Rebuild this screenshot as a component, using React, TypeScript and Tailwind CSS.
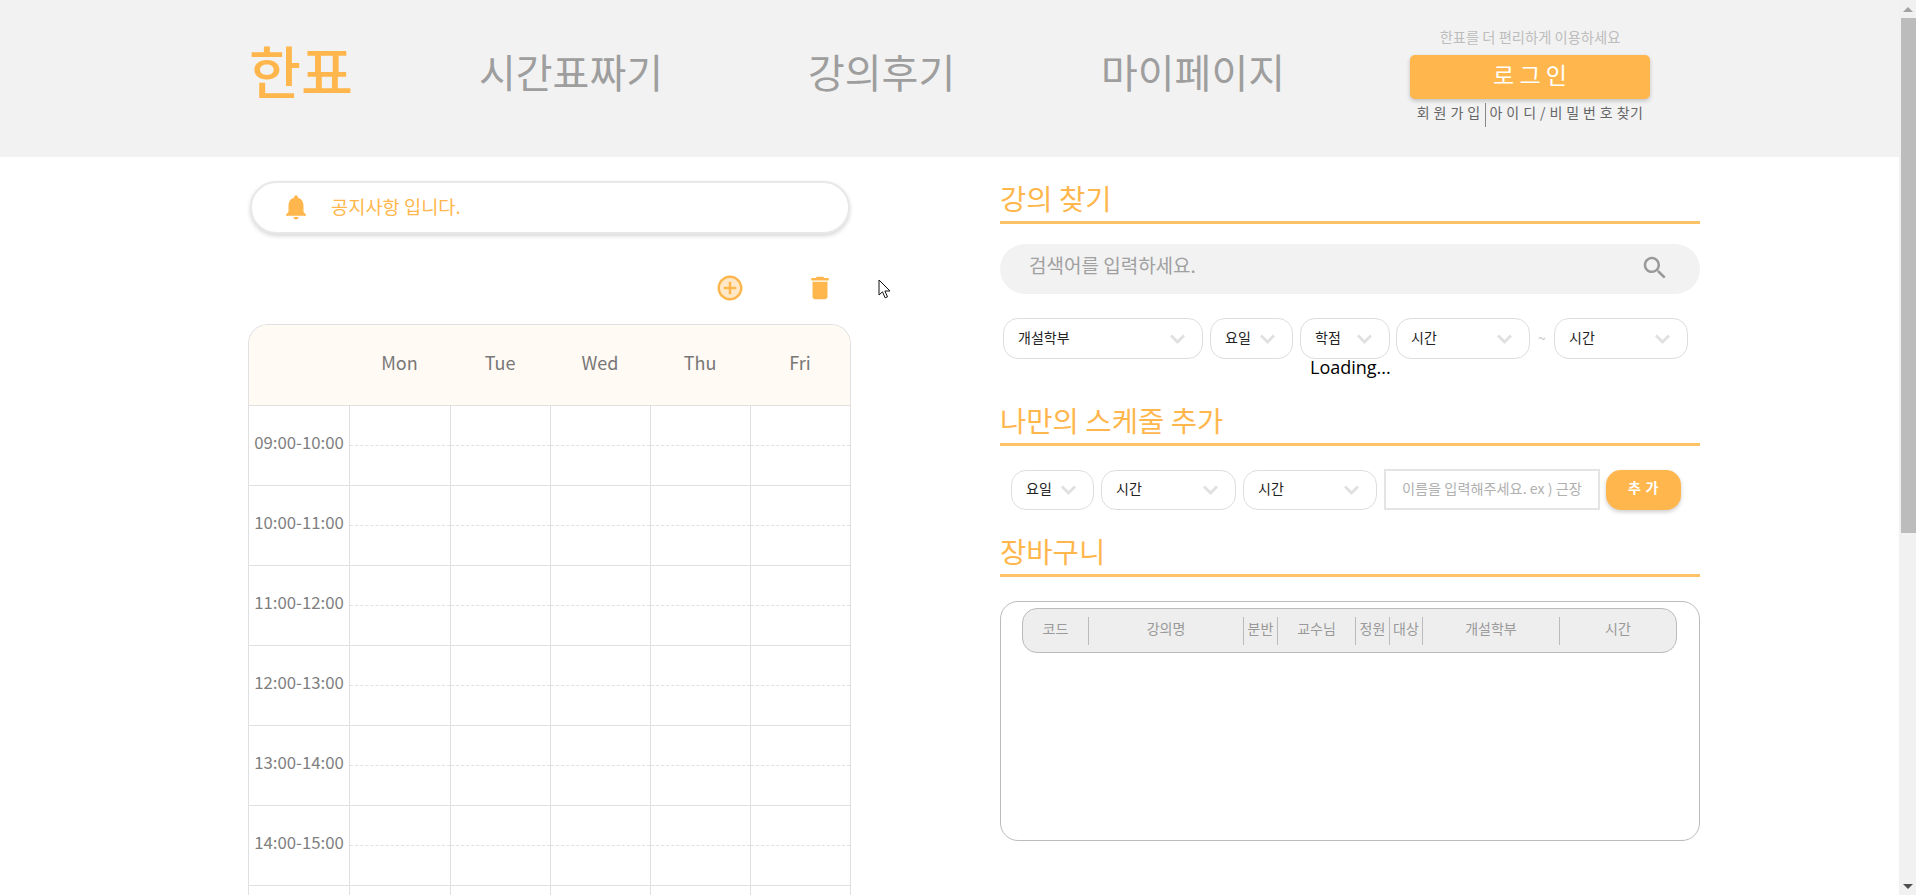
import type { ReactNode } from 'react'

const days = ['Mon', 'Tue', 'Wed', 'Thu', 'Fri']
// 마지막 행은 화면 아래에서 잘려서 라벨이 보이지 않음
const times = [
  '09:00-10:00',
  '10:00-11:00',
  '11:00-12:00',
  '12:00-13:00',
  '13:00-14:00',
  '14:00-15:00',
  '',
]

function Chevron() {
  return (
    <svg className="w-[15px] h-[10px] shrink-0" viewBox="0 0 15 10" fill="none" stroke="#e0e0e0" strokeWidth="2.8">
      <path d="M1 1.5l6.5 6.5L14 1.5" />
    </svg>
  )
}

function Select({ label, className }: { label: string; className: string }) {
  return (
    <div className={`flex items-center justify-between bg-white border border-[#dddddd] rounded-[15px] pl-[14px] pr-[17px] text-[14px] text-[#222222] ${className}`}>
      <span className="-mt-[2px]">{label}</span>
      <Chevron />
    </div>
  )
}

function SectionTitle({ children }: { children: ReactNode }) {
  return (
    <div className="h-[40px] border-b-[3px] border-[#ffc266] box-content">
      <h2 className="text-[28.6px] leading-[34px] text-[#ffb74d]">{children}</h2>
    </div>
  )
}

export default function App() {
  return (
    <div className="flex h-[895px] w-full overflow-hidden bg-white font-['Noto_Sans_CJK_KR','Noto_Sans',sans-serif]">
      <div className="flex-1 min-w-0">
        {/* 헤더 */}
        <header className="flex items-center h-[157px] bg-[#f2f2f2] pl-[249px]">
          <a className="w-[230px] text-[56.5px] font-medium leading-none text-[#ffb74d] -mt-[18px]">한표</a>
          <a className="w-[329px] text-[40px] leading-none text-[#9e9e9e] -mt-[16px]">시간표짜기</a>
          <a className="w-[293px] text-[40px] leading-none text-[#9e9e9e] -mt-[16px]">강의후기</a>
          <a className="w-[309px] text-[40px] leading-none text-[#9e9e9e] -mt-[16px]">마이페이지</a>
          <div className="w-[240px] flex flex-col items-center -mt-[3px]">
            <p className="text-[14.3px] leading-[20px] text-[#bdbdbd]">한표를 더 편리하게 이용하세요</p>
            <button className="w-[240px] h-[44px] mt-[8px] pb-[5px] rounded-[5px] bg-[#ffb74d] text-white text-[23px] shadow-[0_2px_4px_rgba(0,0,0,0.2)]">
              로 그 인
            </button>
            <div className="flex items-start h-[24px] mt-[4px] text-[14px] leading-[18px] tracking-[0.4px] text-[#666666] whitespace-nowrap">
              <span className="pr-[4px]">회 원 가 입</span>
              <span className="border-l border-[#888888] h-[24px] pl-[4px]">아 이 디 / 비 밀 번 호 찾기</span>
            </div>
          </div>
        </header>

        <div className="flex">
          {/* 왼쪽: 시간표 */}
          <div className="w-[603px] ml-[248px]">
            <div className="flex items-center h-[53px] mt-[24px] ml-[2px] mr-[1px] pl-[29px] rounded-full bg-white border-2 border-[#e8e8e8] shadow-[0_2px_4px_rgba(0,0,0,0.16)]">
              <svg className="w-[30px] h-[30px] -mt-[1px]" viewBox="0 0 24 24" fill="#ffb74d">
                <path d="M12 22c1.1 0 2-.9 2-2h-4c0 1.1.9 2 2 2zm6-6v-5c0-3.07-1.63-5.64-4.5-6.32V4c0-.83-.67-1.5-1.5-1.5s-1.5.67-1.5 1.5v.68C7.64 5.36 6 7.92 6 11v5l-2 2v1h16v-1l-2-2z" />
              </svg>
              <span className="ml-[20px] -mt-[3px] text-[18.7px] text-[#ffb74d]">공지사항 입니다.</span>
            </div>

            <div className="relative flex h-[90px]">
              <svg className="absolute left-[467px] top-[39px] w-[30px] h-[30px]" viewBox="0 0 24 24">
                <circle cx="12" cy="12" r="9" fill="#ffb74d" opacity=".3" />
                <path fill="#ffb74d" d="M13 7h-2v4H7v2h4v4h2v-4h4v-2h-4V7zm-1-5C6.49 2 2 6.49 2 12s4.49 10 10 10 10-4.49 10-10S17.51 2 12 2zm0 18c-4.41 0-8-3.59-8-8s3.59-8 8-8 8 3.59 8 8-3.59 8-8 8z" />
              </svg>
              <svg className="absolute left-[557px] top-[39px] w-[30px] h-[30px]" viewBox="0 0 24 24" fill="#ffb74d">
                <path d="M6 19c0 1.1.9 2 2 2h8c1.1 0 2-.9 2-2V7H6v12zM19 4h-3.5l-1-1h-5l-1 1H5v2h14V4z" />
              </svg>
              {/* 마우스 커서 */}
              <svg className="absolute left-[630px] top-[45px] w-[13px] h-[20px]" viewBox="0 0 13 20" fill="#ffffff" stroke="#111111" strokeWidth="1">
                <path d="M1 1v15l3.5-3.2 2.6 6 2.4-1-2.6-5.8H12L1 1z" />
              </svg>
            </div>

            <div className="border-x border-t border-[#e0e0e0] rounded-t-[20px] overflow-hidden">
              <div className="grid grid-cols-[100px_101px_repeat(4,100px)] h-[81px] bg-[#fffaf3] items-center border-b border-[#e0e0e0]">
                <div />
                {days.map(d => (
                  <div key={d} className="text-center text-[18px] text-[#777777] -mt-[6px]">{d}</div>
                ))}
              </div>
              {times.map((t, i) => (
                <div key={i} className="grid grid-cols-[100px_101px_repeat(4,100px)] h-[80px] border-b border-[#e0e0e0]">
                  <div className="flex items-center justify-center text-[16.8px] text-[#808080] -mt-[5px]">{t}</div>
                  {days.map(d => (
                    <div key={d} className="border-l border-[#e0e0e0]">
                      <div className="h-[40px] border-b border-dashed border-[#e0e0e0]" />
                    </div>
                  ))}
                </div>
              ))}
            </div>
          </div>

          {/* 오른쪽: 강의 찾기 */}
          <div className="w-[700px] ml-[149px]">
            <div className="pt-[24px]">
              <SectionTitle>강의 찾기</SectionTitle>
            </div>
            <div className="flex items-center justify-between h-[50px] mt-[20px] pl-[29px] pr-[30px] rounded-full bg-[#f2f2f2]">
              <span className="text-[19px] text-[#a0a0a0] -mt-[8px]">검색어를 입력하세요.</span>
              <svg className="w-[30px] h-[30px] -mt-[2px]" viewBox="0 0 24 24" fill="#999999">
                <path d="M15.5 14h-.79l-.28-.27C15.41 12.59 16 11.11 16 9.5 16 5.91 13.09 3 9.5 3S3 5.91 3 9.5 5.91 16 9.5 16c1.61 0 3.09-.59 4.23-1.57l.27.28v.79l5 4.99L20.49 19l-4.99-5zm-6 0C7.01 14 5 11.99 5 9.5S7.01 5 9.5 5 14 7.01 14 9.5 11.99 14 9.5 14z" />
              </svg>
            </div>
            <div className="relative flex items-center h-[41px] mt-[24px] pl-[3px]">
              <Select label="개설학부" className="w-[200px] h-[41px]" />
              <Select label="요일" className="w-[83px] h-[41px] ml-[7px]" />
              <Select label="학점" className="w-[90px] h-[41px] ml-[7px]" />
              <Select label="시간" className="w-[134px] h-[41px] ml-[6px]" />
              <span className="w-[24px] text-center text-[14px] text-[#c8c8c8]">~</span>
              <Select label="시간" className="w-[134px] h-[41px]" />
            </div>
            <div className="h-[18px] ml-[310px] text-[18px] leading-[16px] text-black font-['Open_Sans',sans-serif]">Loading...</div>

            <div className="mt-[26px]">
              <SectionTitle>나만의 스케줄 추가</SectionTitle>
            </div>
            <div className="flex items-center h-[41px] mt-[23px] pl-[11px]">
              <Select label="요일" className="w-[83px] h-[40px]" />
              <Select label="시간" className="w-[135px] h-[40px] ml-[7px]" />
              <Select label="시간" className="w-[134px] h-[40px] ml-[7px]" />
              <div className="flex items-center w-[216px] h-[41px] ml-[7px] pl-[16px] pb-[2px] border-2 border-[#e4e4e4] text-[14.2px] text-[#b0b0b0] whitespace-nowrap">
                이름을 입력해주세요. ex ) 근장
              </div>
              <button className="w-[75px] h-[40px] ml-[6px] pb-[4px] rounded-[15px] bg-[#ffb74d] text-white text-[14px] font-bold tracking-[0.05em] shadow-[0_2px_4px_rgba(0,0,0,0.2)]">
                추 가
              </button>
            </div>

            <div className="mt-[24px]">
              <SectionTitle>장바구니</SectionTitle>
            </div>
            <div className="h-[240px] mt-[24px] pt-[6px] pl-[21px] pr-[22px] border border-[#bbbbbb] rounded-[18px]">
              <div className="flex items-center h-[45px] rounded-[15px] bg-[#eeeeee] border border-[#bbbbbb] text-[14px] text-[#999999] text-center">
                <div className="w-[65px] h-[28px] leading-[22px]">코드</div>
                <div className="w-[155px] h-[28px] leading-[22px] border-l border-[#bbbbbb]">강의명</div>
                <div className="w-[34px] h-[28px] leading-[22px] border-l border-[#bbbbbb]">분반</div>
                <div className="w-[78px] h-[28px] leading-[22px] border-l border-[#bbbbbb]">교수님</div>
                <div className="w-[34px] h-[28px] leading-[22px] border-l border-[#bbbbbb]">정원</div>
                <div className="w-[33px] h-[28px] leading-[22px] border-l border-[#bbbbbb]">대상</div>
                <div className="w-[137px] h-[28px] leading-[22px] border-l border-[#bbbbbb]">개설학부</div>
                <div className="flex-1 h-[28px] leading-[22px] border-l border-[#bbbbbb]">시간</div>
              </div>
            </div>
          </div>
        </div>
      </div>

      {/* 스크롤바 */}
      <div className="flex flex-col w-[17px] shrink-0 bg-[#f1f1f1]">
        <div className="flex items-center justify-center h-[18px] pl-[1px]">
          <div className="w-0 h-0 border-x-[5px] border-x-transparent border-b-[5px] border-b-[#a3a3a3]" />
        </div>
        <div className="h-[515px] ml-[2px] bg-[#bcbcbc]" />
        <div className="flex-1" />
        <div className="flex items-center justify-center h-[18px] pl-[1px]">
          <div className="w-0 h-0 border-x-[5px] border-x-transparent border-t-[5px] border-t-[#505050]" />
        </div>
      </div>
    </div>
  )
}
